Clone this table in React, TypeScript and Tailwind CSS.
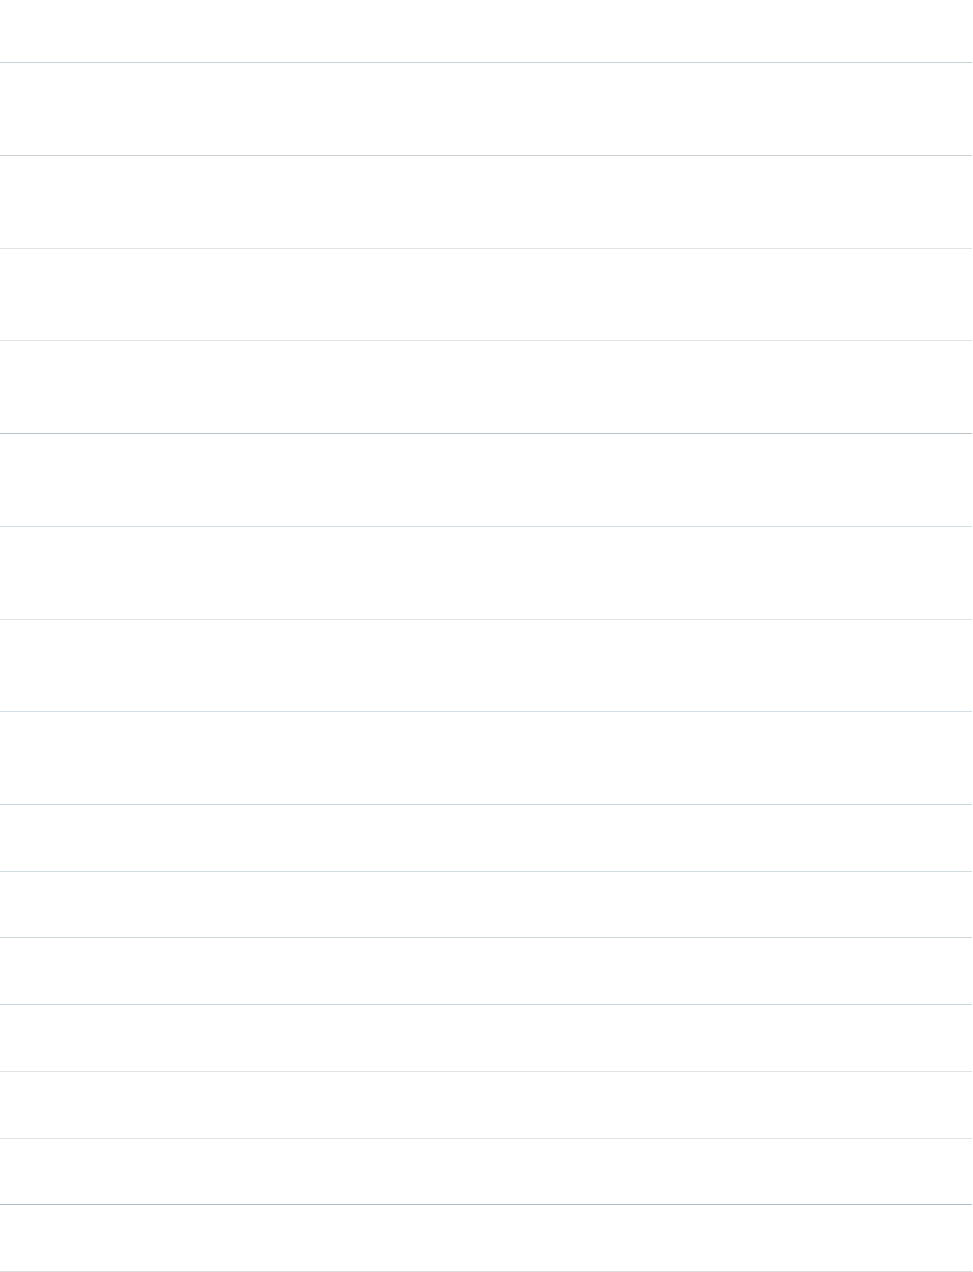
export default function App() {
  // row dividers, colours picked from the screenshot
  const tall = [
    "border-[#cbd2d5]",
    "border-[#dfe4e8]",
    "border-[#dfe4e8]",
    "border-[#b9c3c9]",
    "border-[#d3dfe5]",
    "border-[#dfe4e8]",
    "border-[#d3dfe5]",
    "border-[#c9d8de]",
  ];
  const short = [
    "border-[#d3dce0]",
    "border-[#cfd6da]",
    "border-[#c9d8de]",
    "border-[#dfe4e8]",
    "border-[#dfe4e8]",
    "border-[#abc1c9]",
    "border-[#d8dee1]",
  ];

  return (
    <div className="min-h-screen bg-white font-['Liberation_Sans',sans-serif]">
      <div className="w-[972px] flex flex-col">
        <div className="h-[63px] border-b border-[#c8d3d7]"></div>
        {tall.map((c, i) => (
          <div key={"t" + i} className={"h-[92.75px] border-b " + c}></div>
        ))}
        {short.map((c, i) => (
          <div key={"s" + i} className={"h-[66.71px] border-b " + c}></div>
        ))}
      </div>
    </div>
  );
}
